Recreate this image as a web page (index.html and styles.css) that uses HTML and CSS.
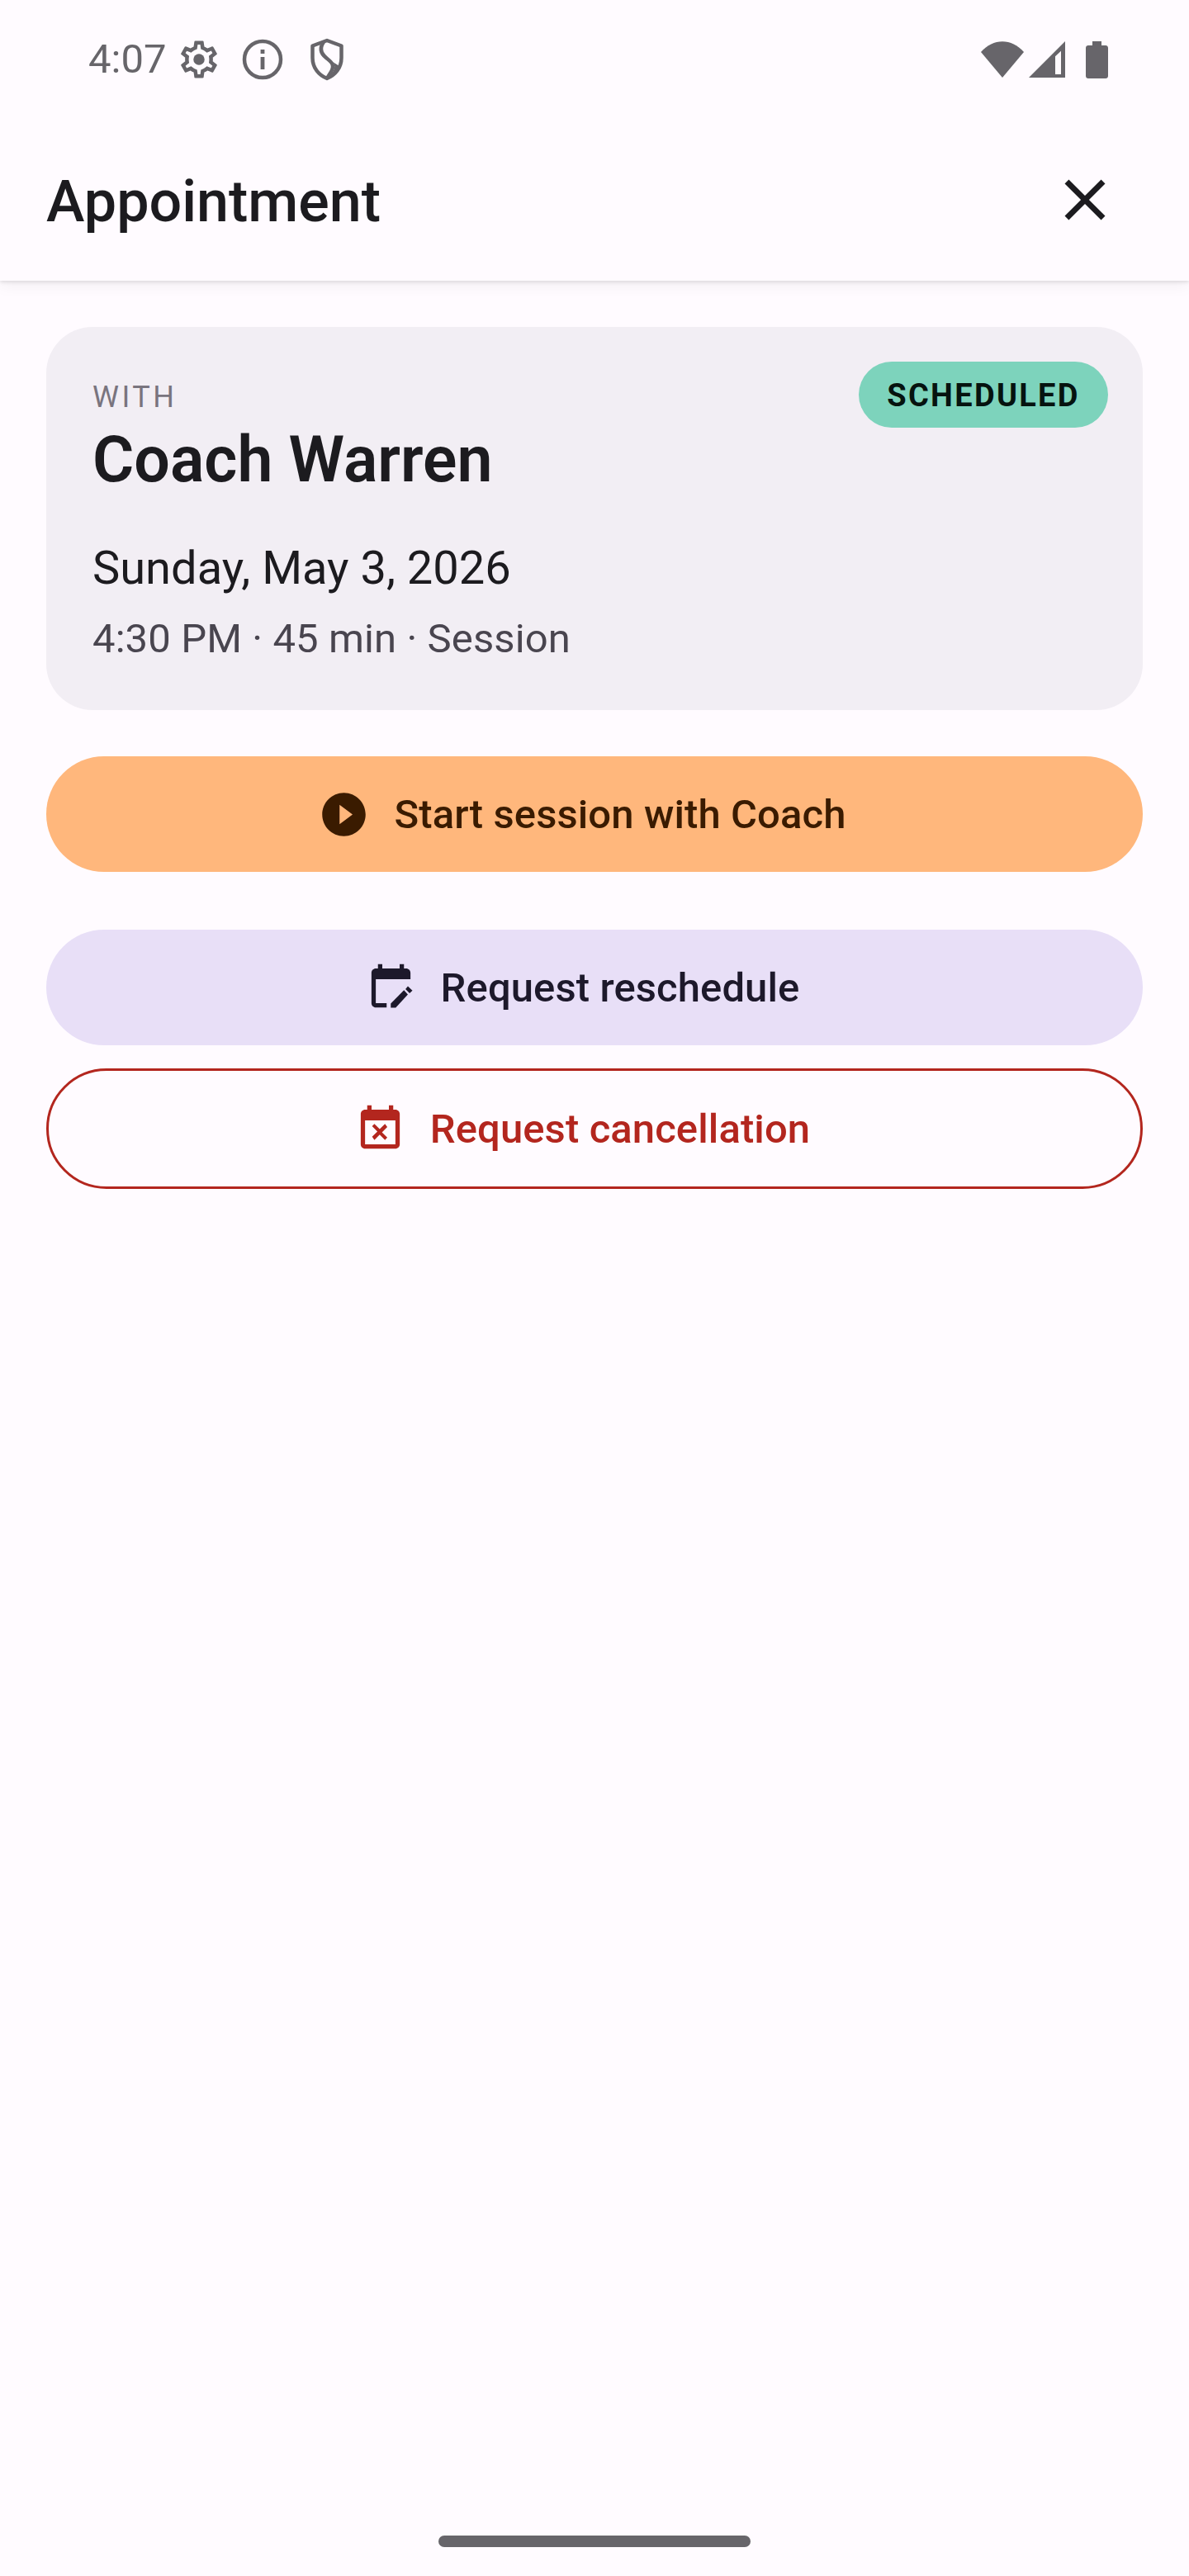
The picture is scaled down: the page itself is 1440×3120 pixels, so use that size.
FILE: index.html
```html
<!DOCTYPE html>
<html lang="en">
<head>
<meta charset="utf-8">
<title>Appointment</title>
<link rel="stylesheet" href="styles.css">
</head>
<body>
<div class="screen">
  <div class="status-bar">
    <div class="status-left">
      <span class="clock">4:07</span>
      <svg class="s-gear" viewBox="0 0 24 24"><path d="M19.43 12.98c.04-.32.07-.64.07-.98 0-.34-.03-.66-.07-.98l2.11-1.65c.19-.15.24-.42.12-.64l-2-3.46c-.09-.16-.26-.25-.44-.25-.06 0-.12.01-.17.03l-2.49 1c-.52-.4-1.08-.73-1.69-.98l-.38-2.65C14.46 2.18 14.25 2 14 2h-4c-.25 0-.46.18-.49.42l-.38 2.65c-.61.25-1.17.59-1.69.98l-2.49-1c-.06-.02-.12-.03-.18-.03-.17 0-.34.09-.43.25l-2 3.46c-.13.22-.07.49.12.64l2.11 1.65c-.04.32-.07.65-.07.98 0 .33.03.66.07.98l-2.11 1.65c-.19.15-.24.42-.12.64l2 3.46c.09.16.26.25.44.25.06 0 .12-.01.17-.03l2.49-1c.52.4 1.08.73 1.69.98l.38 2.65c.03.24.24.42.49.42h4c.25 0 .46-.18.49-.42l.38-2.65c.61-.25 1.17-.59 1.69-.98l2.49 1c.06.02.12.03.18.03.17 0 .34-.09.43-.25l2-3.46c.12-.22.07-.49-.12-.64l-2.11-1.65zm-1.98-1.71c.04.31.05.52.05.73 0 .21-.02.43-.05.73l-.14 1.13.89.7 1.08.84-.7 1.21-1.27-.51-1.04-.42-.9.68c-.43.32-.84.56-1.25.73l-1.06.43-.16 1.13-.2 1.35h-1.4l-.19-1.35-.16-1.13-1.06-.43c-.43-.18-.83-.41-1.23-.71l-.91-.7-1.06.43-1.27.51-.7-1.21 1.08-.84.89-.7-.14-1.13c-.03-.31-.05-.54-.05-.74s.02-.43.05-.73l.14-1.13-.89-.7-1.08-.84.7-1.21 1.27.51 1.04.42.9-.68c.43-.32.84-.56 1.25-.73l1.06-.43.16-1.13.2-1.35h1.39l.19 1.35.16 1.13 1.06.43c.43.18.83.41 1.23.71l.91.7 1.06-.43 1.27-.51.7 1.21-1.07.85-.89.7.14 1.13z"/><circle cx="12" cy="12" r="3"/></svg>
      <svg class="s-info" viewBox="0 0 54 54"><circle cx="27" cy="27" r="22" fill="none"/><rect x="24.6" y="24" width="4.8" height="15"/><rect x="24.6" y="15" width="4.8" height="5"/></svg>
      <svg class="s-shield" viewBox="0 0 44 54"><path class="line" d="M22 4 L39.5 10.5 V25 C39.5 37 32 46 22 50 C12 46 4.5 37 4.5 25 V10.5 Z"/><path class="line" d="M18 6 C12 14 15 20 21 25 C27 30 32 33 27 42 L22 50"/><path d="M29 30 C33 35 31 40 27 45 L25 48 C31 45 35 41 37 35 Z"/></svg>
    </div>
    <div class="status-right">
      <svg class="s-wifi" viewBox="0 0 52 44"><path d="M0 13 C15 -4 37 -4 52 13 L26 44 Z"/></svg>
      <svg class="s-signal" viewBox="0 0 44 44"><path d="M0 44 L44 0 V44 Z M32 18.300 V40 H39 V11.700 Z" fill-rule="evenodd"/></svg>
      <svg class="s-battery" viewBox="0 0 27 45"><path d="M8 0 H19 V5 H24 C25.700 5 27 6.300 27 8 V42 C27 43.700 25.700 45 24 45 H3 C1.300 45 0 43.700 0 42 V8 C0 6.300 1.300 5 3 5 H8 Z"/></svg>
    </div>
  </div>

  <header class="app-bar">
    <h1 class="app-title">Appointment</h1>
    <svg class="close-icon" viewBox="0 0 24 24"><path d="M19 6.41L17.59 5 12 10.59 6.41 5 5 6.41 10.59 12 5 17.59 6.41 19 12 13.41 17.59 19 19 17.59 13.41 12z"/></svg>
  </header>

  <main class="content">
    <section class="card">
      <span class="chip">SCHEDULED</span>
      <div class="with-label">WITH</div>
      <div class="coach-name">Coach Warren</div>
      <div class="date-line">Sunday, May 3, 2026</div>
      <div class="meta-line">4:30 PM · 45 min · Session</div>
    </section>

    <button class="btn btn-start">
      <svg class="btn-icon" viewBox="0 0 24 24"><path d="M12 2C6.480 2 2 6.480 2 12s4.480 10 10 10 10-4.480 10-10S17.520 2 12 2zm-2 14.500v-9l6 4.500-6 4.500z"/></svg>
      <span>Start session with Coach</span>
    </button>

    <div class="secondary-actions">
      <button class="btn btn-reschedule">
        <svg class="btn-icon" viewBox="0 0 24 24"><path d="M19 3h-1V1h-2v2H8V1H6v2H5c-1.100 0-2 .9-2 2v14c0 1.100.9 2 2 2h5v-2H5V8h16V5c0-1.100-.9-2-2-2z"/><path d="M11.900 21.100h2.300l5.600-6.100-1.800-2-6.100 6.200z"/><path d="M19.800 11.200l2.100 2-1.300 1.300-1.900-1.900z"/></svg>
        <span>Request reschedule</span>
      </button>
      <button class="btn btn-cancel">
        <svg class="btn-icon" viewBox="0 0 24 24"><path d="M9.310 17l2.440-2.440L14.190 17l1.060-1.060-2.440-2.440 2.440-2.440L14.190 9.600l-2.440 2.440L9.310 9.600l-1.060 1.060 2.440 2.440-2.440 2.440L9.310 17zM19 3h-1V1h-2v2H8V1H6v2H5c-1.110 0-1.990.9-1.990 2L3 19c0 1.100.89 2 2 2h14c1.100 0 2-.9 2-2V5c0-1.100-.9-2-2-2zm0 16H5V8h14v11z"/></svg>
        <span>Request cancellation</span>
      </button>
    </div>
  </main>

  <div class="gesture-area"><div class="gesture-bar"></div></div>
</div>
</body>
</html>
```

FILE: styles.css
```css
* { box-sizing: border-box; }

html, body {
  margin: 0;
  padding: 0;
}

body {
  background: #fffbff;
  font-family: Roboto, "Liberation Sans", sans-serif;
  color: #1c1b1f;
}

.screen {
  width: 1440px;
  height: 3120px;
  display: flex;
  flex-direction: column;
  background: #fffbff;
}

/* status bar */
.status-bar {
  position: relative;
  z-index: 1;
  height: 144px;
  padding: 42px 98px 0 107px;
  display: flex;
  justify-content: space-between;
  align-items: flex-start;
  background: #fffbff;
}

.status-left,
.status-right {
  display: flex;
  align-items: center;
  height: 60px;
}

.clock {
  font-size: 49px;
  line-height: 60px;
  color: #67656a;
  width: 107px;
}

.status-bar svg { fill: #67656a; stroke: #67656a; stroke-width: 0; display: block; }
.s-gear { width: 54px; height: 54px; }
.s-info { width: 54px; height: 54px; margin-left: 23px; }
.status-bar .s-info circle { stroke-width: 4.5; }
.s-shield { width: 44px; height: 54px; margin-left: 29px; }
.status-bar .s-shield .line { fill: none; stroke-width: 4.5; stroke-linejoin: round; }
.s-wifi { width: 52px; height: 44px; }
.s-signal { width: 44px; height: 44px; margin-left: 6px; }
.s-battery { width: 27px; height: 45px; margin-left: 25px; }

/* app bar */
.app-bar {
  height: 196px;
  padding: 3px 84px 0 56px;
  display: flex;
  align-items: center;
  justify-content: space-between;
  background: #fffbff;
  box-shadow: 0 2px 4px rgba(0, 0, 0, 0.10), 0 6px 18px rgba(0, 0, 0, 0.05);
  position: relative;
}

.app-title {
  margin: 0;
  font-size: 70px;
  font-weight: 500;
  line-height: 92px;
  color: #1c1b1f;
}

.close-icon { width: 84px; height: 84px; fill: #1c1b1f; display: block; margin-top: -3px; }

/* content */
.content {
  flex: 1;
  padding: 56px 56px 0;
  display: flex;
  flex-direction: column;
}

.card {
  position: relative;
  padding: 65px 56px 56px;
  border-radius: 56px;
  background: #f2eef4;
}

.chip {
  position: absolute;
  top: 42px;
  right: 42px;
  width: 302px;
  height: 80px;
  padding-top: 2px;
  display: flex;
  align-items: center;
  justify-content: center;
  border-radius: 40px;
  background: #7dd3bc;
  color: #06130f;
  font-size: 38px;
  font-weight: 700;
  letter-spacing: 2.3px;
}

.with-label {
  font-size: 36px;
  line-height: 40px;
  letter-spacing: 3.5px;
  color: #79747e;
}

.coach-name {
  margin-top: 8px;
  font-size: 77px;
  font-weight: 600;
  line-height: 96px;
  color: #1c1b1f;
}

.date-line {
  margin-top: 48px;
  font-size: 56px;
  line-height: 70px;
  color: #1c1b1f;
}

.meta-line {
  margin-top: 21px;
  font-size: 49px;
  letter-spacing: 0.1px;
  line-height: 60px;
  color: #49454f;
}

.btn {
  width: 100%;
  border: 0;
  padding: 0 30px 0 0;
  display: flex;
  align-items: center;
  justify-content: center;
  gap: 29px;
  font-family: inherit;
  font-size: 49px;
  font-weight: 500;
  letter-spacing: 0.1px;
  border-radius: 70px;
}

.btn-icon { width: 63px; height: 63px; fill: currentColor; display: block; flex: none; }

.btn-start {
  height: 140px;
  margin-top: 56px;
  background: #ffb77c;
  color: #3a1b00;
}

.secondary-actions {
  margin-top: 70px;
  display: flex;
  flex-direction: column;
  gap: 28px;
}

.btn-reschedule {
  height: 140px;
  background: #e8dff7;
  color: #1d192b;
}

.btn-cancel {
  height: 146px;
  background: transparent;
  border: 3px solid #b3261e;
  border-radius: 73px;
  color: #b3261e;
}

/* gesture bar */
.gesture-area {
  height: 64px;
  display: flex;
  justify-content: center;
}

.gesture-bar {
  width: 378px;
  height: 14px;
  border-radius: 7px;
  background: #67656a;
  margin-top: 15px;
}
```
